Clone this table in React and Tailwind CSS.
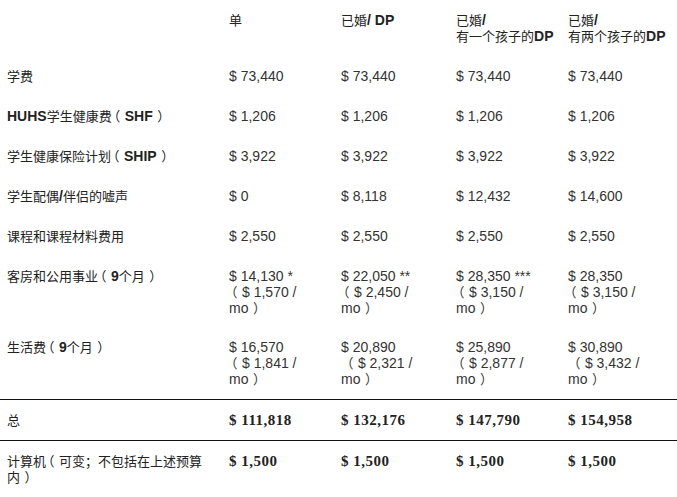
import React from "react";

// CJK characters and full-width punctuation render regular at 13px; Latin keeps the cell's weight
const CJK = /([\u3000-\u303f\u4e00-\u9fff\uff00-\uffef]+)/;

// the reference font centres its full-width brackets: use the half-width form and pad both sides
function Cjk({ text }) {
  return text.split(/([（）])/).map((ch, i) => {
    if (ch === "（")
      return <span key={i} className="[font-feature-settings:'halt'] pl-[2px] pr-[4.5px]">{ch}</span>;
    if (ch === "）")
      return <span key={i} className="[font-feature-settings:'halt'] pl-[4.5px] pr-[2px]">{ch}</span>;
    return ch;
  });
}

function Mixed({ text }) {
  return text.split(CJK).map((part, i) =>
    CJK.test(part) ? (
      <span key={i} className="font-normal text-[13px] leading-[14px]">
        <Cjk text={part} />
      </span>
    ) : (
      <span key={i}>{part}</span>
    )
  );
}

const rows = [
  { label: "学费", values: [["$ 73,440"], ["$ 73,440"], ["$ 73,440"], ["$ 73,440"]] },
  { label: "HUHS学生健康费（SHF）", values: [["$ 1,206"], ["$ 1,206"], ["$ 1,206"], ["$ 1,206"]] },
  { label: "学生健康保险计划（SHIP）", values: [["$ 3,922"], ["$ 3,922"], ["$ 3,922"], ["$ 3,922"]] },
  { label: "学生配偶/伴侣的嘘声", values: [["$ 0"], ["$ 8,118"], ["$ 12,432"], ["$ 14,600"]] },
  { label: "课程和课程材料费用", values: [["$ 2,550"], ["$ 2,550"], ["$ 2,550"], ["$ 2,550"]] },
  {
    label: "客房和公用事业（9个月）",
    pb: "pb-[11px]",
    values: [
      ["$ 14,130 *", "（$ 1,570 /", "mo）"],
      ["$ 22,050 **", "（$ 2,450 /", "mo）"],
      ["$ 28,350 ***", "（$ 3,150 /", "mo）"],
      ["$ 28,350", "（$ 3,150 /", "mo）"],
    ],
  },
  {
    label: "生活费（9个月）",
    values: [
      ["$ 16,570", "（$ 1,841 /", "mo）"],
      ["$ 20,890", " （$ 2,321 /", "mo）"],
      ["$ 25,890", "（$ 2,877 /", "mo）"],
      ["$ 30,890", " （$ 3,432 /", "mo）"],
    ],
  },
];

const totalCell =
  "pl-[7px] py-3 font-bold font-['Liberation_Serif',serif] text-[15px] tracking-[0.5px] leading-4 text-[#222]";

export default function App() {
  return (
    <div className="w-[677px] h-[497px] overflow-hidden bg-white text-[#222] font-['Liberation_Sans','Noto_Sans_CJK_SC',sans-serif] text-[14px] leading-4 [text-spacing-trim:space-all]">
      <table className="w-full table-fixed border-collapse">
        <colgroup>
          <col className="w-[222px]" />
          <col className="w-[112px]" />
          <col className="w-[115px]" />
          <col className="w-[112px]" />
          <col />
        </colgroup>
        <thead>
          <tr className="align-top font-bold text-left">
            <th className="pl-[7px] pr-[10px] py-3"></th>
            <th className="pl-[7px] py-3"><Mixed text="单" /></th>
            <th className="pl-[7px] py-3"><Mixed text="已婚/ DP" /></th>
            <th className="pl-[7px] py-3">
              <Mixed text="已婚/" />
              <br />
              <Mixed text="有一个孩子的DP" />
            </th>
            <th className="pl-[7px] py-3">
              <Mixed text="已婚/" />
              <br />
              <Mixed text="有两个孩子的DP" />
            </th>
          </tr>
        </thead>
        <tbody>
          {rows.map((row) => (
            <tr key={row.label} className="align-top">
              <th className={`pl-[7px] pr-[10px] pt-3 ${row.pb || "pb-3"} text-left font-bold`}>
                <Mixed text={row.label} />
              </th>
              {row.values.map((lines, i) => (
                <td key={i} className={`pl-[7px] pt-3 ${row.pb || "pb-3"} text-[#333]`}>
                  {lines.map((line, j) => (
                    <div key={j} className="whitespace-pre">
                      <Mixed text={line} />
                    </div>
                  ))}
                </td>
              ))}
            </tr>
          ))}
          <tr className="align-top border-t border-b border-[#111]">
            <th className="pl-[7px] pr-[10px] py-3 text-left font-bold">
              <Mixed text="总" />
            </th>
            {["$ 111,818", "$ 132,176", "$ 147,790", "$ 154,958"].map((v) => (
              <td key={v} className={totalCell}>
                {v}
              </td>
            ))}
          </tr>
          <tr className="align-top">
            <th className="pl-[7px] pr-[10px] py-3 text-left font-bold">
              <Mixed text="计算机（可变；不包括在上述预算" />
              <br />
              <Mixed text="内）" />
            </th>
            {[0, 1, 2, 3].map((i) => (
              <td key={i} className={totalCell}>
                $ 1,500
              </td>
            ))}
          </tr>
        </tbody>
      </table>
    </div>
  );
}
